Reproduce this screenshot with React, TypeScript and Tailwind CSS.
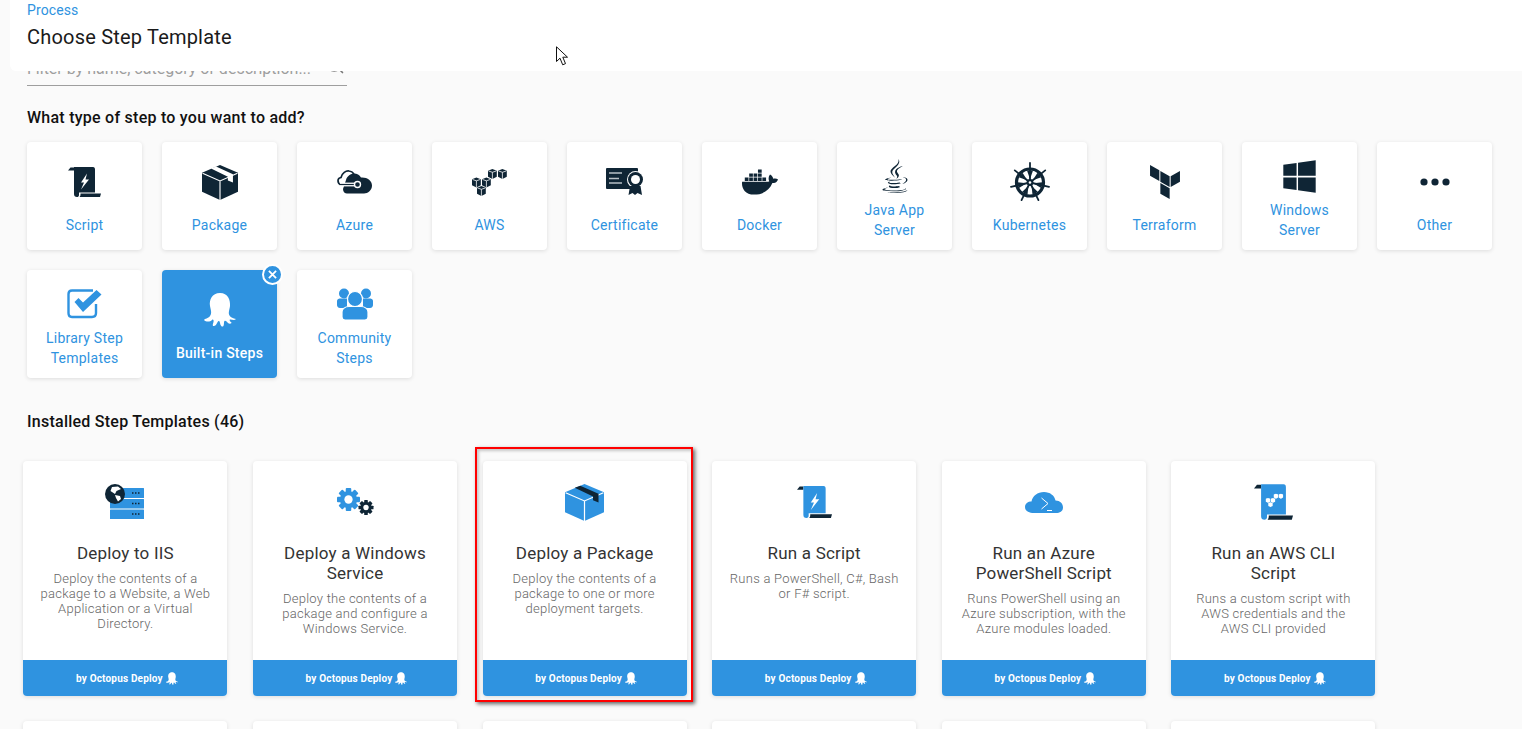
import type { ReactNode } from 'react'
import { Search } from 'lucide-react'
import { FaDocker, FaJava, FaWindows } from 'react-icons/fa'
import { SiTerraform } from 'react-icons/si'

const dark = '#0f2535'
const blue = '#2f93e0'

function Octopus({ className, color = '#fff' }: { className: string; color?: string }) {
  return (
    <svg viewBox="0 0 32 34" className={className} fill={color}>
      <path d="M16 0C8 0 5 7 6 13C7 18 8 20 6 23C4 26 1 25 0 27C2 29 6 29 8 27C9 26 10 27 9.5 29C9 31 8 33 10 33C12 33 13 30 14 28.5C15 27.5 15.5 28 16 30C16.5 33 18 34 19 33.5C20.5 32.5 19.5 29 20.5 28C21.5 27 23 29 24 30C25 31 27.5 31 27.5 29.5C26 28.5 25 27 26 26.5C27.5 26 30 28 32 26C29 25 27 25 25.5 22.5C24 20 25.5 17 26 13C26.5 7 24 0 16 0Z" />
    </svg>
  )
}

function Scroll({ body, foot, className, children }: { body: string; foot: string; className: string; children: ReactNode }) {
  return (
    <svg viewBox="0 0 33 30" className={className}>
      <path d="M0 3.5L2.5 .5H6V3.5Z" fill={foot} />
      <path d="M6 0H25C26.5 0 27 1 27 2.500V25.500H11V28C11 29.500 10 30 9 30C7 30 6 29 6 27Z" fill={body} />
      <path d="M12.500 26.500H33L32 30H11.500C12.500 29 12.500 28 12.500 26.500Z" fill={foot} />
      {children}
    </svg>
  )
}

function Bolt() {
  return <path d="M19 6.500L13 15.500H16L13 22.500L21 12.500H17.500Z" fill="#fff" />
}

function Box({ body, tape, line, className }: { body: string; tape: string; line: string; className: string }) {
  return (
    <svg viewBox="0 0 32 34" className={className} preserveAspectRatio="none">
      <path d="M16 0L32 7.500V26L16 34L0 26V7.500Z" fill={body} />
      <path d="M0.500 8L16 15.500L31.500 8M16 15.500V34" fill="none" stroke={line} strokeWidth="1" />
      <path d="M8 3.500L12.500 1.500L27.500 9V17L23 15V11.500Z" fill={tape} />
    </svg>
  )
}

function Cube({ x, y, s = 1.1, fill }: { x: number; y: number; s?: number; fill: string }) {
  return (
    <g transform={`translate(${x} ${y}) scale(${s})`}>
      <path d="M4 0L8 1.500V7L4 9L0 7V1.500Z" fill={fill} />
      <path d="M0.500 1.800L4 3L7.500 1.800M4 3V9" fill="none" stroke="#fff" strokeWidth=".7" />
    </g>
  )
}

function AwsCubes({ fill }: { fill: string }) {
  return (
    <>
      <Cube x={16} y={0} fill={fill} />
      <Cube x={26} y={0} fill={fill} />
      <Cube x={0} y={8.500} fill={fill} />
      <Cube x={10} y={8.500} fill={fill} />
      <Cube x={5} y={17} fill={fill} />
    </>
  )
}

function Wheel({ className }: { className: string }) {
  const angles = [0, 51.4, 102.8, 154.3, 205.7, 257.1, 308.6]
  return (
    <svg viewBox="0 0 40 40" className={className}>
      <circle cx="20" cy="20.500" r="13.500" fill="none" stroke={dark} strokeWidth="3.200" />
      <circle cx="20" cy="20.500" r="3.400" fill={dark} />
      {angles.map((a) => (
        <g key={a} transform={`rotate(${a} 20 20.500)`}>
          <path d="M20 20.500V1" stroke={dark} strokeWidth="1.800" strokeLinecap="round" />
          <path d="M20 17L17 8.500H23Z" fill={dark} />
        </g>
      ))}
      <circle cx="20" cy="20.500" r="1.300" fill="#fff" />
    </svg>
  )
}

function Gear({ cx, cy, r, fill }: { cx: number; cy: number; r: number; fill: string }) {
  return (
    <g>
      {[0, 45, 90, 135].map((a) => (
        <rect key={a} x={cx - r * 0.24} y={cy - r} width={r * 0.48} height={r * 2} rx={r * 0.08} fill={fill} transform={`rotate(${a} ${cx} ${cy})`} />
      ))}
      <circle cx={cx} cy={cy} r={r * 0.75} fill={fill} />
      <circle cx={cx} cy={cy} r={r * 0.36} fill="#fff" />
    </g>
  )
}

const cloud = 'M9 21C4 21 0 19 0 15C0 11.500 3 9.500 6.500 9.500C7.500 4 12.500 0 19 0C25 0 29.500 3.500 30.500 8.500C35 8.500 38 11.500 38 15.500C38 19 35 21 31 21Z'

const steps: { label: string; two?: boolean; icon: ReactNode }[] = [
  {
    label: 'Script',
    icon: <Scroll body={dark} foot={dark} className="w-[33px] h-[30px]"><Bolt /></Scroll>,
  },
  {
    label: 'Package',
    icon: <Box body={dark} tape="#fff" line="#fff" className="w-[36px] h-[35px]" />,
  },
  {
    label: 'Azure',
    icon: (
      <svg viewBox="0 0 35 24" className="w-[35px] h-[24px]">
        <path d="M4 15C0 13 0 8 4 7.500C5 3 9 .5 12 1C14 1.200 16 2.500 17 4" fill="none" stroke={dark} strokeWidth="1.700" />
        <path d="M9 10C10 6 14 3.500 17 3.500C20 3.500 22.500 5 24 7.500C30 7 35 10.500 35 15.500C35 20 31 23.500 27 23.500H10C8 23.500 6 22 6 19Z" fill={dark} />
        <path d="M3 14.500H19" stroke="#fff" strokeWidth="3.800" />
        <path d="M3 14.500H19" stroke={dark} strokeWidth="1.200" />
        <circle cx="20.500" cy="14.500" r="3" fill={dark} stroke="#fff" strokeWidth="1.400" />
      </svg>
    ),
  },
  {
    label: 'AWS',
    icon: (
      <svg viewBox="0 0 35 27" className="w-[35px] h-[27px]">
        <AwsCubes fill={dark} />
      </svg>
    ),
  },
  {
    label: 'Certificate',
    icon: (
      <svg viewBox="0 0 38 28" className="w-[38px] h-[28px]">
        <rect x="0" y="0" width="32" height="21" rx="1" fill={dark} />
        <path d="M3 5H16M3 10.500H13M3 15H16" stroke="#b8c0c6" strokeWidth="1.300" />
        <circle cx="29.500" cy="11.500" r="8.500" fill="#fff" />
        <path d="M24 18L22.500 27L26.500 25L29 27L31.500 25L36 27L34.500 18Z" fill={dark} />
        <circle cx="29.500" cy="11.500" r="7.500" fill={dark} />
        <circle cx="29.500" cy="11.500" r="4.500" fill="#fff" />
      </svg>
    ),
  },
  { label: 'Docker', icon: <FaDocker className="w-[36px] h-[36px] text-[#0f2535]" /> },
  { label: 'Java App Server', two: true, icon: <FaJava className="w-[34px] h-[34px] text-[#0f2535]" /> },
  { label: 'Kubernetes', icon: <Wheel className="w-[40px] h-[40px]" /> },
  { label: 'Terraform', icon: <SiTerraform className="w-[34px] h-[34px] text-[#0f2535]" /> },
  { label: 'Windows Server', two: true, icon: <FaWindows className="w-[37px] h-[37px] text-[#0f2535]" /> },
  {
    label: 'Other',
    icon: (
      <svg viewBox="0 0 30 8" className="w-[30px] h-[8px]">
        <circle cx="4" cy="4" r="3.600" fill={dark} />
        <circle cx="15" cy="4" r="3.600" fill={dark} />
        <circle cx="26" cy="4" r="3.600" fill={dark} />
      </svg>
    ),
  },
  {
    label: 'Library Step Templates',
    two: true,
    icon: (
      <svg viewBox="0 0 36 30" className="w-[36px] h-[30px]">
        <path d="M26 1.500H5C2.500 1.500 1.500 3 1.500 5V24C1.500 26.500 3 28 5 28H25C27.500 28 29 26.500 29 24V15" fill="none" stroke={blue} strokeWidth="2.400" />
        <path d="M7.500 13L11.500 9L16 13.500L29.500 1L34.500 5.500L16 23Z" fill={blue} />
      </svg>
    ),
  },
  {
    label: 'Built-in Steps',
    icon: <Octopus className="w-[32px] h-[34px]" />,
  },
  {
    label: 'Community Steps',
    two: true,
    icon: (
      <svg viewBox="0 0 36 32" className="w-[36px] h-[32px]">
        <circle cx="7" cy="5.500" r="5" fill={blue} />
        <circle cx="29" cy="5.500" r="5" fill={blue} />
        <path d="M0 13C0 11 2 10.500 4 10.500H10V20H3C1 20 0 18.500 0 17Z" fill={blue} />
        <path d="M36 13C36 11 34 10.500 32 10.500H26V20H33C35 20 36 18.500 36 17Z" fill={blue} />
        <circle cx="18" cy="11" r="7.500" fill={blue} stroke="#fff" strokeWidth="1.200" />
        <path d="M5 24C5 21 8 18.500 12 18.500H24C28 18.500 31 21 31 24V29C31 30.500 30 32 28 32H8C6 32 5 30.500 5 29Z" fill={blue} stroke="#fff" strokeWidth="1.200" />
      </svg>
    ),
  },
]

const templates: { title: string; desc: string; icon: ReactNode }[] = [
  {
    title: 'Deploy to IIS',
    desc: 'Deploy the contents of a package to a Website, a Web Application or a Virtual Directory.',
    icon: (
      <svg viewBox="0 0 40 36" className="w-[40px] h-[36px]">
        <g fill={blue}>
          <rect x="5" y="4" width="34" height="10" rx=".5" />
          <rect x="5" y="15" width="34" height="9.500" rx=".5" />
          <rect x="5" y="25.500" width="34" height="9.500" rx=".5" />
        </g>
        <path d="M27 9H35M27 19.500H35M27 30H35" stroke={dark} strokeWidth="1.500" strokeDasharray="1.500 1.500" />
        <circle cx="10" cy="10" r="10" fill={dark} />
        <path d="M7 3L13 2.500L16 5L11.500 7L10 10L5.500 7ZM10 11L15 12L16 15L13 17.500L11 14Z" fill="#fff" />
      </svg>
    ),
  },
  {
    title: 'Deploy a Windows Service',
    desc: 'Deploy the contents of a package and configure a Windows Service.',
    icon: (
      <svg viewBox="0 0 37 28" className="w-[37px] h-[28px]">
        <Gear cx={11.500} cy={11.500} r={11.500} fill={blue} />
        <Gear cx={29} cy={19.500} r={7.500} fill={dark} />
      </svg>
    ),
  },
  {
    title: 'Deploy a Package',
    desc: 'Deploy the contents of a package to one or more deployment targets.',
    icon: <Box body={blue} tape={dark} line="#fff" className="w-[39px] h-[37px]" />,
  },
  {
    title: 'Run a Script',
    desc: 'Runs a PowerShell, C#, Bash or F# script.',
    icon: <Scroll body={blue} foot={dark} className="w-[35px] h-[32px]"><Bolt /></Scroll>,
  },
  {
    title: 'Run an Azure PowerShell Script',
    desc: 'Runs PowerShell using an Azure subscription, with the Azure modules loaded.',
    icon: (
      <svg viewBox="0 0 38 21" className="w-[38px] h-[21px]">
        <path d={cloud} fill={blue} />
        <path d="M16.500 6L23 11.500L16.500 17M22 18.500H27" fill="none" stroke="#fff" strokeWidth="1" />
      </svg>
    ),
  },
  {
    title: 'Run an AWS CLI Script',
    desc: 'Runs a custom script with AWS credentials and the AWS CLI provided',
    icon: (
      <Scroll body={blue} foot={dark} className="w-[39px] h-[36px]">
        <g transform="translate(10 8) scale(.42)">
          <AwsCubes fill="#fff" />
        </g>
      </Scroll>
    ),
  },
]

export default function App() {
  return (
    <div className="relative h-[729px] overflow-hidden bg-[#fafafa] font-['Roboto',sans-serif]">
      <div className="absolute top-0 left-[10px] right-0 z-10 h-[71px] bg-white rounded-bl-md pl-[17px]">
        <a className="block text-sm leading-5 tracking-[0.1px] text-[#2f93e0]">Process</a>
        <h1 className="mt-[5px] text-xl leading-6 tracking-[0.2px] text-[#1a1a1a]">Choose Step Template</h1>
      </div>
      <svg viewBox="0 0 13 20" className="absolute left-[556px] top-[46px] z-20 w-[13px] h-[20px]">
        <path d="M.5.8V15.500L4 12.200L6.700 18.800L9.500 17.600L6.800 11.200H11.500Z" fill="#fff" stroke="#111" strokeWidth="1" />
      </svg>

      <div className="pt-[52px] pl-[27px]">
        <div className="flex w-[320px] h-[34px] items-center justify-between border-b border-[#9e9e9e] pr-[2px]">
          <span className="text-base text-[#9e9e9e]">Filter by name, category or description...</span>
          <Search className="w-5 h-5 -mt-[7px] text-[#777]" />
        </div>

        <h2 className="mt-5 text-base leading-6 font-medium tracking-[0.25px] text-[#111]">What type of step to you want to add?</h2>
        <div className="mt-3 grid grid-cols-[repeat(11,115px)] gap-5">
          {steps.map((s) => {
            const active = s.label === 'Built-in Steps'
            return (
              <div
                key={s.label}
                className={`relative h-[108px] rounded flex flex-col items-center shadow-[0_1px_4px_rgba(0,0,0,0.12)] ${s.two ? 'pt-[14px]' : 'pt-5'} ${active ? 'bg-[#2f93e0]' : 'bg-white'}`}
              >
                <div className="h-10 flex items-center justify-center">{s.icon}</div>
                <p className={`text-center text-sm leading-5 tracking-[0.25px] px-3 ${s.two ? 'mt-1' : 'mt-[13px]'} ${active ? 'text-white font-medium' : 'text-[#2f93e0]'}`}>{s.label}</p>
                {active && (
                  <span className="absolute -top-[6px] -right-[6px] w-[21px] h-[21px] rounded-full bg-[#2f93e0] border-2 border-white flex items-center justify-center">
                    <svg viewBox="0 0 10 10" className="w-[9px] h-[9px]">
                      <path d="M1 1L9 9M9 1L1 9" stroke="#fff" strokeWidth="2" />
                    </svg>
                  </span>
                )}
              </div>
            )
          })}
        </div>

        <h2 className="mt-8 text-base leading-6 font-medium tracking-[0.25px] text-[#111]">Installed Step Templates (46)</h2>
        <div className="mt-[27px] -ml-[3.6px] grid grid-cols-[repeat(6,204px)] gap-x-[25.6px] gap-y-[25px]">
          {templates.map((t) => (
            <div key={t.title} className="relative h-[235px] rounded bg-white flex flex-col shadow-[0_1px_4px_rgba(0,0,0,0.12)]">
              <div className="flex-1 px-4 pt-[17px] text-center">
                <div className="h-12 flex items-center justify-center">{t.icon}</div>
                <h3 className="mt-[17px] text-[17px] leading-5 tracking-[0.2px] text-[#333]">{t.title}</h3>
                <p className="mt-2 text-[13px] leading-[15px] font-light tracking-[0.25px] text-[#666]">{t.desc}</p>
              </div>
              <div className="h-9 rounded-b bg-[#2f93e0] flex items-center justify-center gap-[3px] pl-[3px] text-[10px] font-bold tracking-[0.18px] text-white">
                by Octopus Deploy
                <Octopus className="w-[12px] h-[13px]" />
              </div>
              {t.title === 'Deploy a Package' && (
                <div className="absolute -top-[14px] -left-[8px] -right-[6px] -bottom-[6px] border-2 border-[#ff0000] shadow-[2px_2px_4px_rgba(0,0,0,0.6),inset_2px_2px_3px_rgba(0,0,0,0.2)]" />
              )}
            </div>
          ))}
          {[1, 2, 3, 4, 5, 6].map((n) => (
            <div key={n} className="h-[235px] rounded bg-white shadow-[0_1px_4px_rgba(0,0,0,0.12)]" />
          ))}
        </div>
      </div>
    </div>
  )
}
